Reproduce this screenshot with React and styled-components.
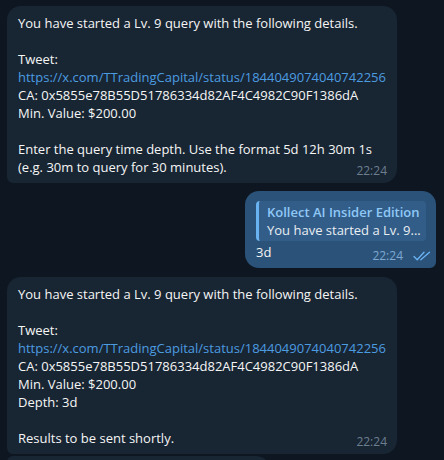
import React from "react";
import styled, { createGlobalStyle } from "styled-components";

const Global = createGlobalStyle`
  html, body { margin: 0; padding: 0; background: #0e1621; }
  body { font-family: "Open Sans", "Noto Sans", sans-serif; }
`;

const Chat = styled.div`
  display: flex;
  flex-direction: column;
  padding: 6px 8px 0 7px;
  height: 460px;
  box-sizing: border-box;
  overflow: hidden;
`;

const Row = styled.div`
  display: flex;
  justify-content: ${(p) => (p.$out ? "flex-end" : "flex-start")};
  margin-top: ${(p) => p.$gap || 0}px;
`;

const Bubble = styled.div`
  position: relative;
  box-sizing: border-box;
  width: ${(p) => p.$w}px;
  min-height: ${(p) => p.$minH || 0}px;
  padding: 8px 10px 7px 11px;
  background: ${(p) => (p.$out ? "#2b5278" : "#182533")};
  border-radius: ${(p) => p.$radius};
  color: #f5f5f5;
  font-size: 13px;
  line-height: 18px;
`;

const Line = styled.div`
  white-space: pre;
  min-height: 18px;
`;

const Link = styled.span`
  color: #4c9ce0;
`;

const Time = styled.span`
  position: absolute;
  right: ${(p) => (p.$out ? 33 : 10)}px;
  bottom: 4px;
  font-size: 12px;
  line-height: 16px;
  color: ${(p) => (p.$out ? "#7da8d3" : "#6d7f8f")};
`;

const Checks = styled.svg`
  position: absolute;
  right: 5px;
  bottom: 7px;
`;

const Reply = styled.div`
  display: flex;
  flex-direction: column;
  margin: 2px 0 2px 0;
  padding: 2px 8px 2px 8px;
  border-left: 3px solid #6ab3f3;
  border-radius: 4px;
  background: #325d88;
`;

const ReplyName = styled.div`
  font-weight: 600;
  color: #8fc8f7;
  white-space: nowrap;
`;

const ReplyText = styled.div`
  color: #e9eef3;
  white-space: nowrap;
`;

const startMsg = (extra, last) => (
  <>
    <Line>You have started a Lv. 9 query with the following details.</Line>
    <Line> </Line>
    <Line>Tweet:</Line>
    <Line>
      <Link>https://x.com/TTradingCapital/status/1844049074040742256</Link>
    </Line>
    <Line>CA: 0x5855e78B55D51786334d82AF4C4982C90F1386dA</Line>
    <Line>Min. Value: $200.00</Line>
    {extra}
    <Line> </Line>
    {last}
  </>
);

export default function App() {
  return (
    <>
      <Global />
      <Chat>
        <Row>
          <Bubble $w={390} $radius="14px 14px 14px 6px">
            {startMsg(
              null,
              <>
                <Line>Enter the query time depth. Use the format 5d 12h 30m 1s</Line>
                <Line>(e.g. 30m to query for 30 minutes).</Line>
              </>
            )}
            <Time>22:24</Time>
          </Bubble>
        </Row>
        <Row $out $gap={8}>
          <Bubble $out $w={191} $radius="14px 14px 6px 14px">
            <Reply>
              <ReplyName>Kollect AI Insider Edition</ReplyName>
              <ReplyText>You have started a Lv. 9...</ReplyText>
            </Reply>
            <Line>3d</Line>
            <Time $out>22:24</Time>
            <Checks width="18" height="10" viewBox="0 0 18 10" fill="none" stroke="#6ab3f3" strokeWidth="1.3" strokeLinecap="round" strokeLinejoin="round">
              <path d="M1 5.5 L4.2 8.8 L11 1.2" />
              <path d="M7.8 8.8 L16.5 1.2" />
            </Checks>
          </Bubble>
        </Row>
        <Row $gap={9}>
          <Bubble $w={390} $radius="14px 14px 14px 6px">
            {startMsg(
              <Line>Depth: 3d</Line>,
              <Line>Results to be sent shortly.</Line>
            )}
            <Time>22:24</Time>
          </Bubble>
        </Row>
        <Row $gap={2}>
          <Bubble $w={263} $minH={40} $radius="6px 14px 14px 14px" />
        </Row>
      </Chat>
    </>
  );
}
